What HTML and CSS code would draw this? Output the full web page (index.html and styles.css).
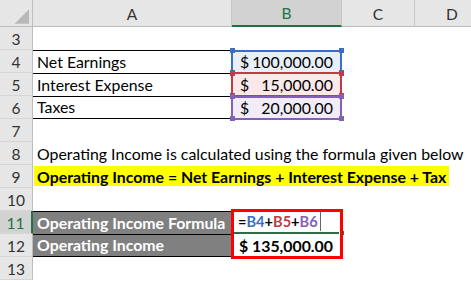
FILE: index.html
```html
<!DOCTYPE html>
<html>
<head>
<meta charset="utf-8">
<link rel="stylesheet" href="styles.css">
</head>
<body>
<div class="sheet">
  <div class="hd corner"><svg width="33" height="27" viewBox="0 0 33 27"><polygon points="15,24 30,9 30,24" fill="#b8b8b8"/></svg></div>
  <div class="hd col">A</div>
  <div class="hd col sel">B</div>
  <div class="hd col">C</div>
  <div class="hd col last">D</div>

  <div class="hd rn">3</div><div class="row-rest"></div>

  <div class="hd rn">4</div><div class="c a bord">Net Earnings</div><div class="c b ref blue"><span>$</span><span>100,000.00</span></div><div class="row-rest2"></div>
  <div class="hd rn">5</div><div class="c a bord">Interest Expense</div><div class="c b ref red"><span>$</span><span>15,000.00</span></div><div class="row-rest2"></div>
  <div class="hd rn">6</div><div class="c a bord bb">Taxes</div><div class="c b ref purple"><span>$</span><span>20,000.00</span></div><div class="row-rest2"></div>

  <div class="hd rn">7</div><div class="row-rest"></div>
  <div class="hd rn">8</div><div class="c wide">Operating Income is calculated using the formula given below</div>
  <div class="hd rn">9</div><div class="c wide"><span class="hl">Operating Income = Net Earnings + Interest Expense + Tax</span></div>
  <div class="hd rn">10</div><div class="row-rest"></div>

  <div class="hd rn act">11</div><div class="c a dark">Operating Income Formula</div><div class="c b formula active">=<span class="fb">B4</span>+<span class="fr">B5</span>+<span class="fp">B6</span><i class="caret"></i><i class="handle"></i><div class="redbox"></div></div><div class="row-rest2"></div>
  <div class="hd rn">12</div><div class="c a dark bb">Operating Income</div><div class="c b total"><span>$</span><span>135,000.00</span></div><div class="row-rest2"></div>
  <div class="hd rn">13</div><div class="row-rest"></div>
</div>
</body>
</html>
```
FILE: styles.css
```css
* { box-sizing: border-box; }
html, body { margin: 0; padding: 0; background: #fff; overflow: hidden; }
body { font-family: Lato, "Open Sans", sans-serif; color: #000; }

.sheet {
  display: grid;
  grid-template-columns: 33px 199px 110px 73px 74px;
  grid-template-rows: 27px repeat(11, 23px);
  width: 489px;
}

.hd {
  background: #e6e6e6;
  color: #333;
  font-size: 15.5px;
  display: flex;
  align-items: center;
  justify-content: center;
}
.corner { border-right: 1px solid #bdbdbd; border-bottom: 1px solid #bdbdbd; }
.col { border-right: 1px solid #c8c8c8; border-bottom: 1px solid #bdbdbd; padding-top: 1px; }
.col.last { border-right: 0; }
.col.sel { background: #d2d2d2; color: #217346; border-bottom: 2px solid #217346; }

.rn { border-right: 1px solid #bdbdbd; border-bottom: 1px solid #d6d6d6; padding-top: 2px; }
.rn.act { background: #d2d2d2; color: #217346; border-right: 2px solid #217346; }

.row-rest { grid-column: 2 / -1; }
.row-rest2 { grid-column: 4 / -1; }

.c {
  font-size: 15.85px;
  display: flex;
  align-items: flex-end;
  padding: 0 4px 2px 4px;
  white-space: nowrap;
  position: relative;
}
.a.bord { border-top: 1px solid #000; }
.a.bb { border-bottom: 1px solid #000; }
.wide { grid-column: 2 / -1; }

.hl {
  background: #ffff00;
  font-weight: bold;
  margin-left: -3px;
  padding: 1px 3px 0 3px;
}

.b { justify-content: space-between; padding: 0 9px 2px 8px; }

.ref::before {
  content: "";
  position: absolute;
  left: -1px; right: 0; top: 0; bottom: -1px;
  border: 2px solid var(--bc);
  background: var(--bg);
  z-index: 0;
}
.ref::after {
  content: "";
  position: absolute;
  left: -2px; right: -2px; top: -2px; bottom: -2px;
  background:
    linear-gradient(var(--bc), var(--bc)) left top / 5px 5px no-repeat,
    linear-gradient(var(--bc), var(--bc)) right top / 5px 5px no-repeat,
    linear-gradient(var(--bc), var(--bc)) left bottom / 5px 5px no-repeat,
    linear-gradient(var(--bc), var(--bc)) right bottom / 5px 5px no-repeat;
  z-index: 2;
}
.ref span { position: relative; z-index: 1; }
.blue { --bc: #3a6fc4; --bg: #e8eff9; }
.red { --bc: #c23b44; --bg: #fbe9ea; }
.purple { --bc: #8460b8; --bg: #f1ecf7; }
.red::before { top: -1px; }
.purple::before { top: 0; }

.dark {
  background: #808080;
  color: #fff;
  font-weight: bold;
  border-top: 1px solid #000;
}
.dark.bb { border-bottom: 1px solid #000; }

.formula { font-size: 14.6px; font-weight: bold; justify-content: flex-start; padding-left: 6px; border-bottom: 2px solid #217346; padding-bottom: 2px; }
.fb { color: #3a6fc4; }
.fr { color: #c23b44; }
.fp { color: #8460b8; }
.caret { display: block; width: 1px; height: 19px; background: #666; margin-left: 2px; margin-bottom: -1px; }
.handle { position: absolute; right: -3px; bottom: -4px; width: 6px; height: 6px; background: #217346; border: 1px solid #fff; }
.redbox {
  position: absolute;
  left: -1px; top: -2px;
  width: 112px; height: 50px;
  border: 3px solid #ff0000;
  z-index: 3;
}
.total { font-weight: bold; padding-left: 7px; }
```
